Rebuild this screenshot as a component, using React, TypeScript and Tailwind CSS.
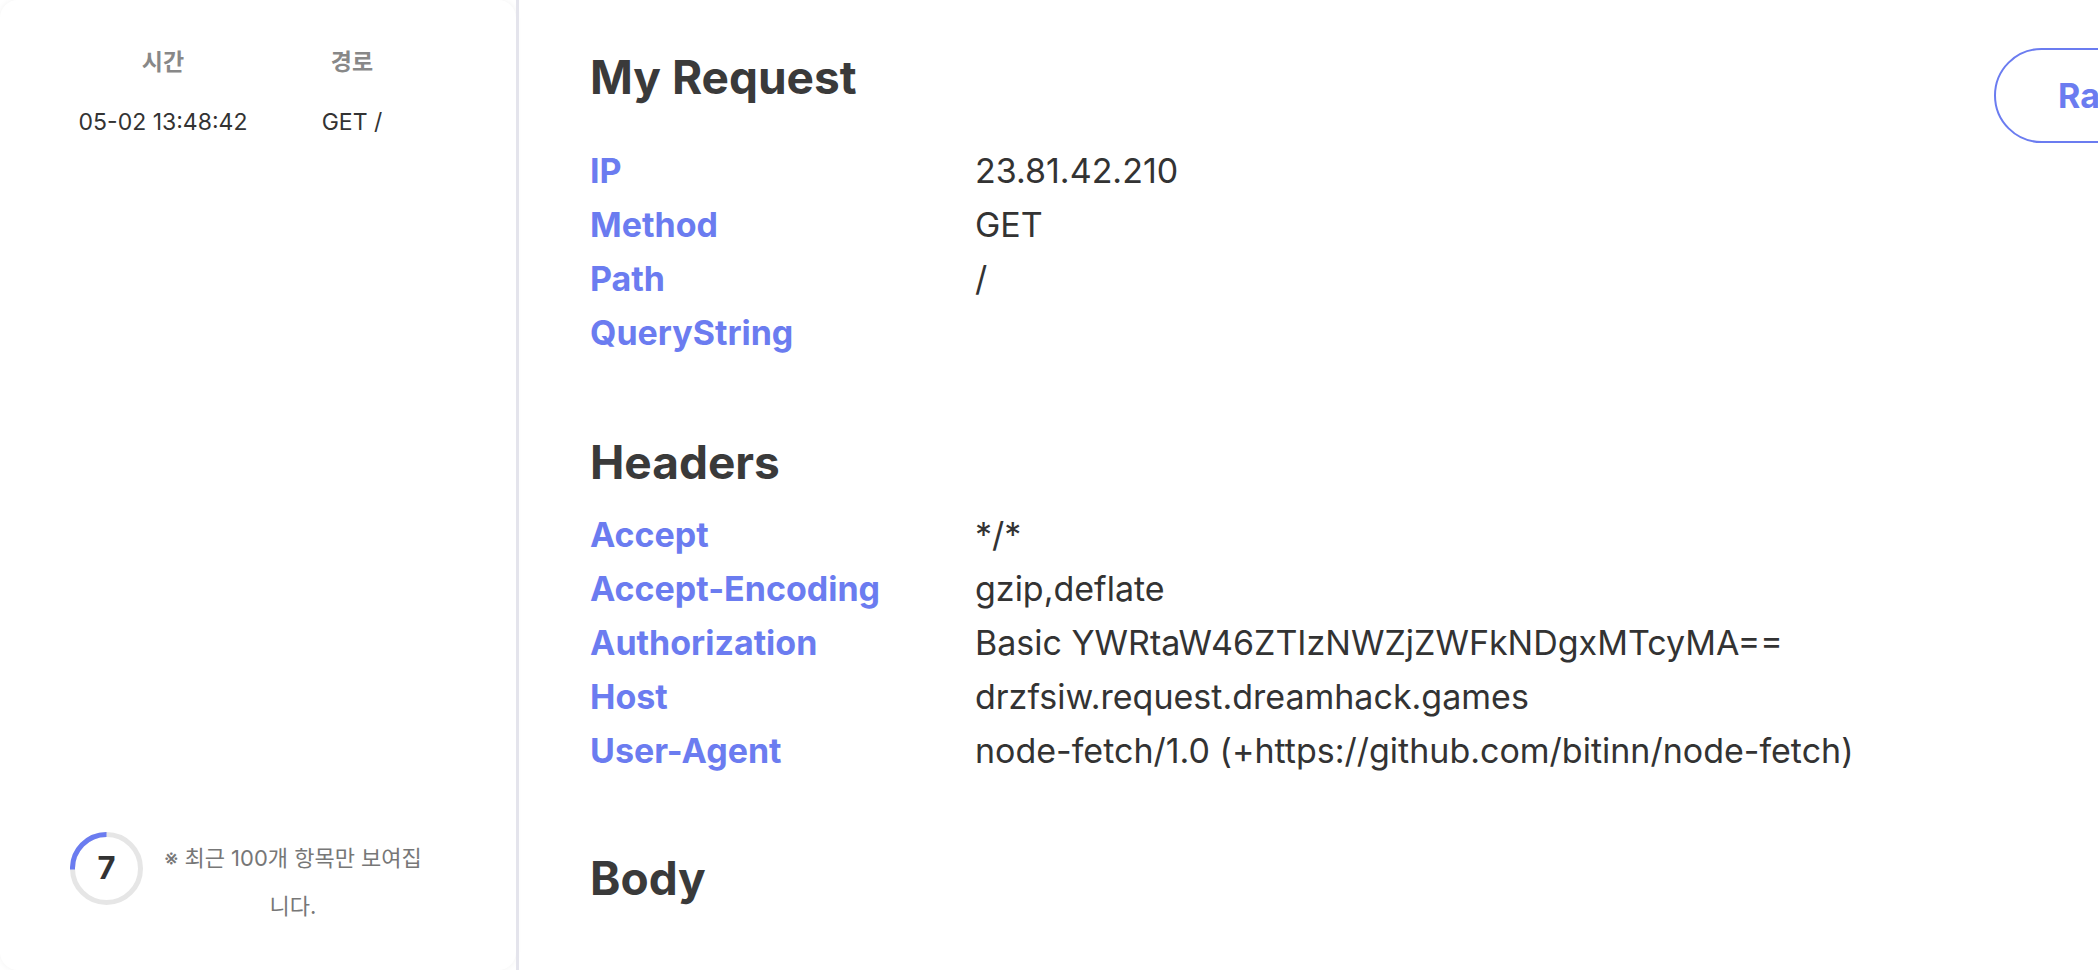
import React from 'react'

const requestRows: [string, string][] = [
  ['IP', '23.81.42.210'],
  ['Method', 'GET'],
  ['Path', '/'],
  ['QueryString', ''],
]

const headerRows: [string, string][] = [
  ['Accept', '*/*'],
  ['Accept-Encoding', 'gzip,deflate'],
  ['Authorization', 'Basic YWRtaW46ZTIzNWZjZWFkNDgxMTcyMA=='],
  ['Host', 'drzfsiw.request.dreamhack.games'],
  ['User-Agent', 'node-fetch/1.0 (+https://github.com/bitinn/node-fetch)'],
]

function Rows({ rows }: { rows: [string, string][] }) {
  return (
    <div className="flex flex-col">
      {rows.map(([k, v]) => (
        <div key={k} className="flex h-[54px] items-center text-[34px] leading-[54px]">
          <div className="w-[385px] shrink-0 font-bold text-[#6b7cf0]">{k}</div>
          <div className="whitespace-nowrap text-[#333]">{v}</div>
        </div>
      ))}
    </div>
  )
}

function Countdown({ value }: { value: number }) {
  return (
    <div className="relative h-[73px] w-[73px] shrink-0">
      <svg width="73" height="73" viewBox="0 0 73 73" className="absolute inset-0">
        <circle cx="36.5" cy="36.5" r="34" fill="none" stroke="#e6e6e6" strokeWidth="5" />
        <path d="M36.5 2.5 A34 34 0 0 0 2.5 37.5" fill="none" stroke="#6b7cf0" strokeWidth="5" />
      </svg>
      <div className="absolute inset-0 flex items-center justify-center text-[31px] font-bold text-[#333]">
        {value}
      </div>
    </div>
  )
}

function Sidebar() {
  return (
    <aside className="flex h-full w-[516px] shrink-0 flex-col justify-between rounded-[18px] bg-white shadow-[0_0_6px_rgba(0,0,0,0.05)]">
      <div className="pt-[47px] pl-[40px]">
        <div className="flex text-[23px] leading-[30px] font-bold text-[#888]">
          <div className="w-[246px] text-center">시간</div>
          <div className="w-[132px] text-center">경로</div>
        </div>
        <div className="mt-[30px] flex text-[23px] leading-[30px] text-[#333]">
          <div className="w-[246px] text-center">05-02 13:48:42</div>
          <div className="w-[132px] text-center">GET /</div>
        </div>
      </div>
      <div className="flex items-start gap-[16px] pb-[40px] pl-[70px]">
        <div className="-mt-[2px]">
          <Countdown value={7} />
        </div>
        <p className="w-[268px] text-center text-[22px] leading-[48px] text-[#777]">
          ※ 최근 100개 항목만 보여집니다.
        </p>
      </div>
    </aside>
  )
}

export default function App() {
  return (
    <div
      className="flex h-[970px] w-[2098px] overflow-hidden bg-white"
      style={{ fontFamily: 'Inter, "Noto Sans CJK KR", sans-serif' }}
    >
      <Sidebar />
      <div className="w-[3px] shrink-0 bg-[#e4e4ec]" />
      <main className="min-w-0 flex-1 pl-[71px] pt-[48px]">
        <section>
          <div className="mb-[1px] flex items-start">
            <h2 className="mt-[3px] text-[46px] leading-[53px] font-bold text-[#3a3a3a]">My Request</h2>
            <button className="ml-auto mr-[-116px] h-[95px] w-[220px] shrink-0 rounded-full border-2 border-[#6b7cf0] pl-[62px] text-left text-[34px] font-bold text-[#6b7cf0]">
              Raw
            </button>
          </div>
          <Rows rows={requestRows} />
        </section>
        <section className="mt-[76px]">
          <h2 className="mb-[19px] text-[46px] leading-[53px] font-bold text-[#3a3a3a]">Headers</h2>
          <Rows rows={headerRows} />
        </section>
        <section className="mt-[74px]">
          <h2 className="text-[46px] leading-[53px] font-bold text-[#3a3a3a]">Body</h2>
        </section>
      </main>
    </div>
  )
}
